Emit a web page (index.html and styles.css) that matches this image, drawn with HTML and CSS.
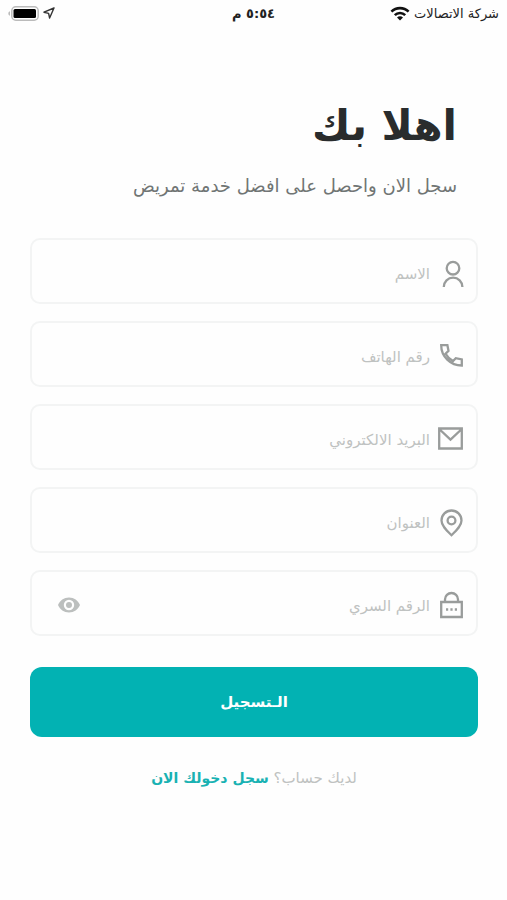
FILE: index.html
```html
<!DOCTYPE html>
<html lang="ar" dir="rtl">
<head>
<meta charset="utf-8">
<meta name="viewport" content="width=device-width, initial-scale=1">
<title>التسجيل</title>
<link rel="stylesheet" href="styles.css">
</head>
<body>
<header class="status">
  <div class="status-side">
    <span>شركة الاتصالات</span>
    <svg class="wifi" viewBox="0 0 20 15" width="20" height="15" fill="none" stroke="#111" stroke-width="2.6" aria-hidden="true"><path d="M1.4 5.7a12.2 12.2 0 0 1 17.2 0M4.8 9.1a7.4 7.4 0 0 1 10.4 0"/><path d="M10 14.5l-3-3a4.2 4.2 0 0 1 6 0z" fill="#111" stroke="none"/></svg>
  </div>
  <time class="clock">٥:٥٤ م</time>
  <div class="status-side status-end">
    <svg viewBox="0 0 12 12" width="12" height="12" fill="none" stroke="#333" stroke-width="1.4" stroke-linejoin="round" aria-hidden="true"><path d="M11 1L1 5.2l4.6 1.2L6.6 11z"/></svg>
    <svg viewBox="0 0 31 15" width="31" height="15" aria-hidden="true"><rect x="3.8" y=".8" width="26.4" height="13.4" rx="4" fill="#fff" stroke="#bbb" stroke-width="1.5"/><rect x="5.500" y="3" width="22.500" height="9" rx="1.500" fill="#000"/><path d="M2 5.2v4.6a2.4 2.4 0 0 1 0-4.6z" fill="#bbb"/></svg>
  </div>
</header>
<main class="page">
  <div class="intro">
    <h1>اهلا بك</h1>
    <p>سجل الان واحصل على افضل خدمة تمريض</p>
  </div>
  <form class="form">
    <label class="field">
      <svg class="icon" viewBox="0 0 28 30" aria-hidden="true"><circle cx="15" cy="10.200" r="6.300"/><path d="M5.800 29a9.300 9.300 0 0 1 18.600 0"/></svg>
      <input type="text" aria-label="الاسم" placeholder="الاسم">
    </label>
    <label class="field">
      <svg class="icon" viewBox="0 0 28 30" aria-hidden="true"><path d="M3.200 4.200h6.200l1.100 5.600-2.900 3c1.800 3.200 4.200 5.500 7.400 7.200l2.800-2.800 6 1.300v6C12.500 24.500 3.200 15.500 3.200 4.200z"/></svg>
      <input type="tel" dir="rtl" aria-label="رقم الهاتف" placeholder="رقم الهاتف">
    </label>
    <label class="field">
      <svg class="icon" viewBox="0 0 28 30" aria-hidden="true"><path d="M1.200 4.500h22.600v20H1.200zM1.200 5l11.300 10.700L23.800 5"/></svg>
      <input type="email" dir="rtl" aria-label="البريد الالكتروني" placeholder="البريد الالكتروني">
    </label>
    <label class="field">
      <svg class="icon" viewBox="0 0 28 30" aria-hidden="true"><path d="M13.500 28.200C8.500 23.500 3.500 19 3.500 13.500a10 10 0 0 1 20 0c0 5.500-5 10-10 14.700z"/><circle cx="13.500" cy="13.500" r="3.900"/></svg>
      <input type="text" aria-label="العنوان" placeholder="العنوان">
    </label>
    <div class="field">
      <svg class="icon" viewBox="0 0 28 30" aria-hidden="true"><path d="M3.200 12h20.600v15H3.200zM7 12V9.500a6.500 6.500 0 0 1 13 0V12"/><path d="M8 19.500h2.200M12.400 19.500h2.200M16.800 19.500H19"/></svg>
      <input type="password" aria-label="الرقم السري" placeholder="الرقم السري">
      <button class="reveal" type="button" aria-label="اظهار الرقم السري">
        <svg viewBox="0 0 24 16" width="24" height="16" aria-hidden="true"><path fill="#bcbfbe" fill-rule="evenodd" d="M12 .5C7 .5 2.800 3.600 1 8c1.800 4.400 6 7.500 11 7.500S21.200 12.400 23 8C21.200 3.600 17 .5 12 .5zM12 2.800a5.200 5.200 0 1 1 0 10.400 5.200 5.200 0 0 1 0-10.400zM12 5a3 3 0 1 0 0 6 3 3 0 0 0 0-6z"/></svg>
      </button>
    </div>
    <button class="submit" type="submit">الـتسجيل</button>
  </form>
  <p class="login">لديك حساب؟ <a href="#login">سجل دخولك الان</a></p>
</main>
</body>
</html>
```
FILE: styles.css
```css
* {
  box-sizing: border-box;
}

body {
  margin: 0;
  background: #fefefe;
  color: #292c2d;
  font-family: "DejaVu Sans", "Noto Sans", sans-serif;
}

.status {
  display: grid;
  grid-template-columns: 1fr auto 1fr;
  align-items: center;
  height: 26px;
  padding: 0 8px;
  color: #222;
  font-size: 13px;
}

.status-side {
  display: flex;
  align-items: center;
  gap: 4px;
  white-space: nowrap;
}

.status-end {
  justify-content: flex-end;
}

.clock {
  font-weight: 700;
}

.page {
  padding: 72px 29px 0 30px;
}

.intro {
  padding: 0 21px;
}

h1,
p {
  margin: 0;
}

h1 {
  font-size: 42px;
  line-height: 56px;
}

.intro p {
  margin-top: 16px;
  color: #707574;
  font-size: 18px;
  line-height: 32px;
  white-space: nowrap;
}

.form {
  display: flex;
  flex-direction: column;
  gap: 17px;
  margin-top: 36px;
}

.field {
  display: flex;
  align-items: center;
  gap: 8px;
  height: 66px;
  padding: 4px 10px 0 25px;
  border: 2px solid #f3f4f4;
  border-radius: 10px;
}

.icon {
  flex: none;
  width: 28px;
  height: 30px;
  fill: none;
  stroke: #999c9b;
  stroke-width: 2.3;
}

.field input {
  flex: 1;
  min-width: 0;
  padding: 2px 0 0;
  border: 0;
  outline: 0;
  background: none;
  color: #292c2d;
  font: 15px/32px "DejaVu Sans", "Noto Sans", sans-serif;
  text-align: right;
}

.field input::placeholder {
  color: #bfc2c1;
  opacity: 1;
}

.reveal {
  display: flex;
  padding: 0;
  border: 0;
  background: none;
}

.submit {
  height: 70px;
  margin-top: 14px;
  border: 0;
  border-radius: 12px;
  background: #02b2b3;
  color: #fff;
  font: 700 15px/32px "DejaVu Sans", "Noto Sans", sans-serif;
}

.login {
  margin-top: 25px;
  color: #bfc2c1;
  font-size: 15px;
  line-height: 32px;
  text-align: center;
}

.login a {
  color: #19b2b3;
  font-size: 14px;
  font-weight: 700;
  text-decoration: none;
}
```
